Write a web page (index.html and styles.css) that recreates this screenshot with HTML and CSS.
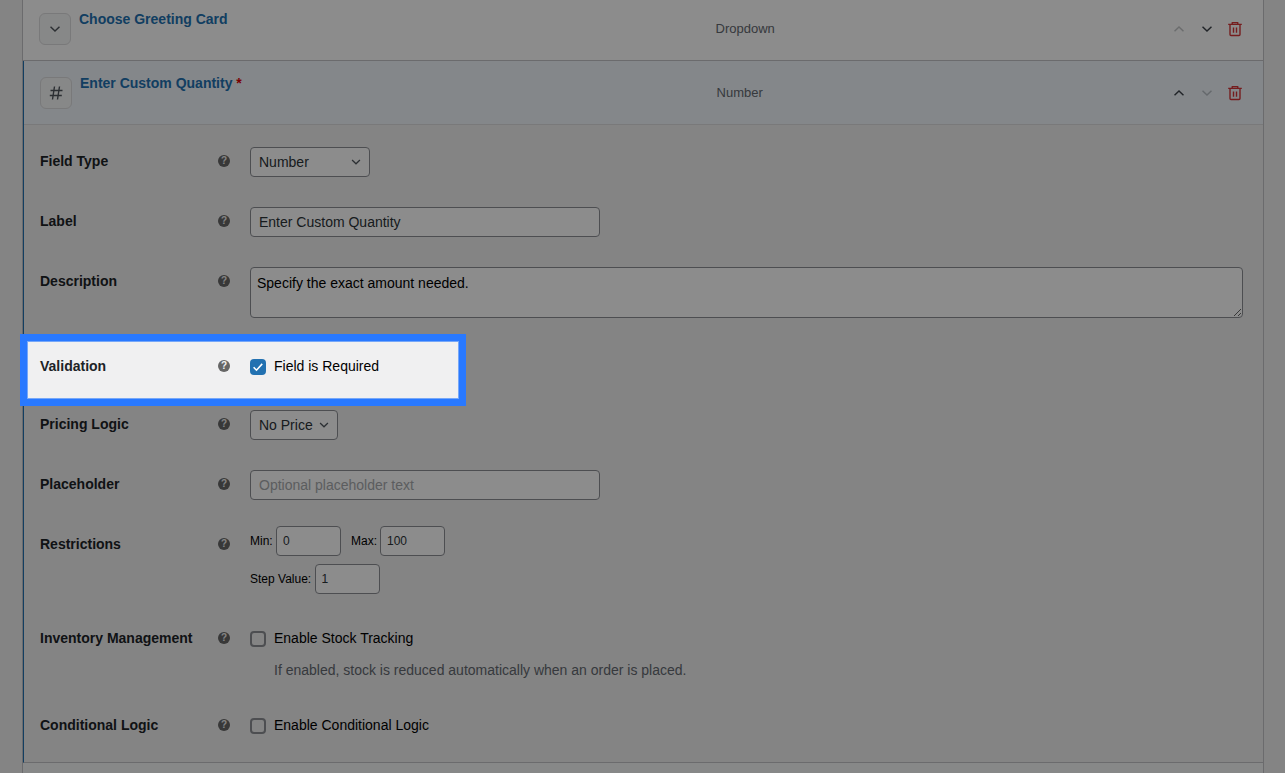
FILE: index.html
```html
<!DOCTYPE html>
<html lang="en">
<head>
<meta charset="utf-8">
<title>Product fields</title>
<link rel="stylesheet" href="styles.css">
</head>
<body>
<svg class="defs" width="0" height="0">
  <symbol id="down" viewBox="0 0 20 20"><path d="M4.4 7.2l5.6 5.4 5.6-5.4" fill="none" stroke="currentColor" stroke-width="1.8"/></symbol>
  <symbol id="up" viewBox="0 0 20 20"><path d="M4.4 12.8l5.6-5.4 5.6 5.4" fill="none" stroke="currentColor" stroke-width="1.8"/></symbol>
  <symbol id="trash" viewBox="0 0 16 16"><path d="M1.2 3.4h13.6M5.2 3V1.6h5.6V3M3 3.6v9.9q0 1 1 1h8q1 0 1-1V3.6M6.5 6.4v5.4M9.5 6.4v5.4" fill="none" stroke="currentColor" stroke-width="1.4" stroke-linejoin="round"/></symbol>
  <symbol id="hash" viewBox="0 0 16 16"><path d="M6.5 1.5l-2 13M11.5 1.5l-2 13M2.5 5.5h12M1.8 10.5h12" fill="none" stroke="currentColor" stroke-width="1.4"/></symbol>
</svg>
<main class="panel">
  <header class="field-head field-head-first">
    <span class="type-icon"><svg width="16" height="16"><use href="#down"/></svg></span>
    <a class="field-title">Choose Greeting Card</a>
    <span class="field-type">Dropdown</span>
    <span class="actions">
      <svg class="arrow off"><use href="#up"/></svg><svg class="arrow"><use href="#down"/></svg><svg class="trash"><use href="#trash"/></svg>
    </span>
  </header>
  <section class="field-open">
    <header class="field-head field-head-active">
      <span class="type-icon"><svg width="16" height="16"><use href="#hash"/></svg></span>
      <a class="field-title">Enter Custom Quantity <b class="star">*</b></a>
      <span class="field-type">Number</span>
      <span class="actions">
        <svg class="arrow"><use href="#up"/></svg><svg class="arrow off"><use href="#down"/></svg><svg class="trash"><use href="#trash"/></svg>
      </span>
    </header>
    <div class="settings">
      <div class="row"><span class="label">Field Type</span><span class="help">?</span>
        <div class="control"><div class="input select select-type">Number<svg width="14" height="14"><use href="#down"/></svg></div></div></div>
      <div class="row"><span class="label">Label</span><span class="help">?</span>
        <div class="control"><input class="input text" value="Enter Custom Quantity"></div></div>
      <div class="row row-description"><span class="label">Description</span><span class="help">?</span>
        <div class="control"><textarea class="area">Specify the exact amount needed.</textarea></div></div>
      <div class="row row-validation"><span class="label">Validation</span><span class="help">?</span>
        <div class="control"><label class="check"><span class="box box-on"><svg width="16" height="16" viewBox="0 0 16 16"><path d="M3.6 8.2l2.9 3 5.7-6.3" fill="none" stroke="#fff" stroke-width="1.6"/></svg></span>Field is Required</label></div></div>
      <div class="row"><span class="label">Pricing Logic</span><span class="help">?</span>
        <div class="control"><div class="input select select-price">No Price<svg width="14" height="14"><use href="#down"/></svg></div></div></div>
      <div class="row"><span class="label">Placeholder</span><span class="help">?</span>
        <div class="control"><input class="input text" placeholder="Optional placeholder text"></div></div>
      <div class="row row-restrictions"><span class="label">Restrictions</span><span class="help">?</span>
        <div class="control limits">
          <div class="limit-line"><label class="limit limit-min">Min:<input class="input num" value="0"></label><label class="limit limit-max">Max:<input class="input num" value="100"></label></div>
          <div class="limit-line"><label class="limit limit-step">Step Value:<input class="input num" value="1"></label></div>
        </div></div>
      <div class="row row-stock"><span class="label">Inventory Management</span><span class="help">?</span>
        <div class="control"><label class="check"><span class="box"></span>Enable Stock Tracking</label><p class="note">If enabled, stock is reduced automatically when an order is placed.</p></div></div>
      <div class="row row-last"><span class="label">Conditional Logic</span><span class="help">?</span>
        <div class="control"><label class="check"><span class="box"></span>Enable Conditional Logic</label></div></div>
    </div>
  </section>
  <footer class="panel-foot"></footer>
</main>
<div class="spotlight"></div>
</body>
</html>
```

FILE: styles.css
```css
* { box-sizing: border-box; }
body {
  position: relative;
  margin: 0;
  height: 773px;
  overflow: hidden;
  background: #f0f0f1;
  color: #000;
  font: 14px/20px "Liberation Sans", Arial, sans-serif;
}
.defs { position: absolute; }
.panel {
  display: flex;
  flex-direction: column;
  height: 773px;
  margin: 0 21px 0 22px;
  border: solid #c3c4c7;
  border-width: 0 1px;
}
.field-head {
  display: grid;
  grid-template-columns: 32px 628.6px 1fr auto;
  column-gap: 8px;
  height: 64px;
  padding: 16px 17px 0 16px;
}
.field-head-first {
  height: 61px;
  padding-top: 13px;
  border-bottom: 1px solid #c3c4c7;
  background: #fff;
}
.field-head-active {
  background: #f0f6fc;
  border-bottom: 1px solid #dcdcde;
}
.type-icon {
  display: flex;
  align-items: center;
  justify-content: center;
  width: 32px;
  height: 32px;
  border: 1px solid #dcdcde;
  border-radius: 6px;
  background: #f6f7f7;
  color: #50575e;
}
.field-title { margin-top: -4px; color: #2271b1; font-weight: 700; }
.star { color: #d00; }
.field-type { font-size: 13px; line-height: 32px; color: #646970; }
.actions { display: flex; align-items: center; height: 32px; gap: 12px; color: #3c434a; }
.arrow { width: 16px; height: 16px; }
.off { opacity: .3; }
.trash { width: 16px; height: 16px; margin-right: 3px; color: #d63638; }
.field-open { border-left: 1px solid #2271b1; height: 702px; border-bottom: 1px solid #c3c4c7; }
.settings { padding-top: 6px; }
.row {
  display: grid;
  grid-template-columns: 178px 32px 1fr;
  height: 60px;
  padding: 0 20px 0 16px;
}
.row-description { height: 85px; }
.row-validation { height: 58px; }
.row-restrictions { height: 94px; }
.row-stock { height: 87px; }
.label { padding-top: 20px; font-weight: 700; color: #1d2327; }
.help {
  width: 12px;
  height: 12px;
  margin-top: 23.6px;
  border-radius: 50%;
  background: #666;
  color: #f0f0f1;
  font-size: 10px;
  line-height: 12px;
  font-weight: 700;
  text-align: center;
}
.control { padding-top: 16px; }
.input {
  display: block;
  height: 30px;
  margin: 0;
  padding: 0 8px;
  border: 1px solid #8c8f94;
  border-radius: 4px;
  background: #fff;
  color: #2c3338;
  font: 14px/28px "Liberation Sans", Arial, sans-serif;
}
.input::placeholder { color: #a7aaad; }
.text { width: 350px; }
.select { display: flex; align-items: center; justify-content: space-between; padding-right: 6px; }
.select svg { color: #50575e; }
.select-type { width: 120px; }
.select-price { width: 88px; }
.area {
  display: block;
  width: 100%;
  height: 51px;
  margin: 0;
  padding: 5px 6px;
  border: 1px solid #8c8f94;
  border-radius: 4px;
  background: #fff;
  color: #000;
  font: 14px/20px "Liberation Sans", Arial, sans-serif;
}
.check { display: flex; gap: 8px; padding-top: 4px; }
.box {
  width: 16px;
  height: 16px;
  margin-top: 3px;
  border: 2px solid #8c8f94;
  border-radius: 4px;
}
.box-on { border: 0; background: #2271b1; }
.box-on svg { display: block; }
.note { margin: 12px 0 0 24px; color: #646970; }
.limits { display: flex; flex-direction: column; gap: 8px; padding-top: 12px; }
.limit-line { display: flex; gap: 10px; }
.limit { display: flex; justify-content: space-between; font-size: 12px; line-height: 30px; }
.limit-min { width: 91px; }
.limit-max { width: 94px; }
.limit-step { width: 129.6px; }
.num { width: 65px; padding: 0 6px; font-size: 12px; }
.panel-foot { flex: 1; background: #f6f7f7; }
.spotlight {
  position: absolute;
  left: 20px;
  top: 334px;
  width: 446px;
  height: 72px;
  border: 7px solid #2979ff;
  box-shadow: 0 0 0 1300px rgba(0, 0, 0, .45), inset 0 0 0 1px #76a7f8;
}
```
